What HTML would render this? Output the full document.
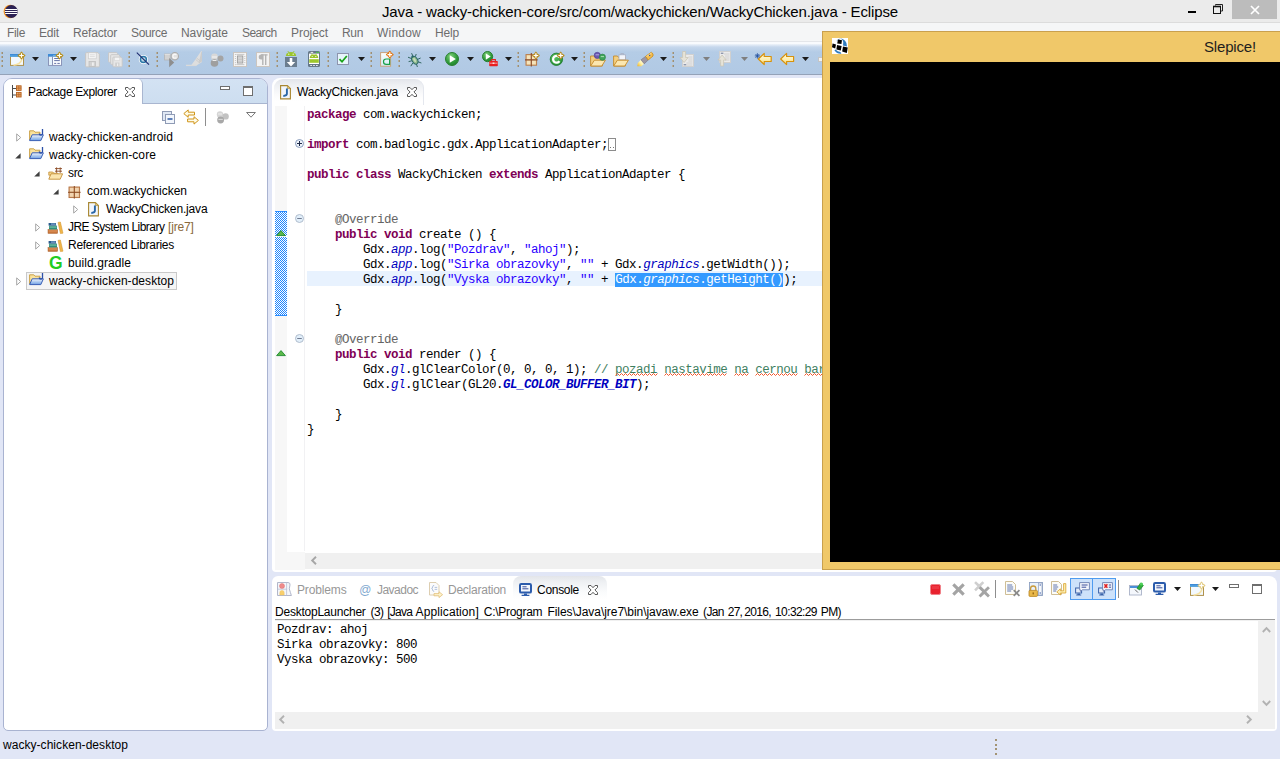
<!DOCTYPE html>
<html>
<head>
<meta charset="utf-8">
<title>Java - Eclipse</title>
<style>
*{margin:0;padding:0;box-sizing:border-box;}
html,body{width:1280px;height:759px;overflow:hidden;background:#e1e6f6;font-family:"Liberation Sans",sans-serif;font-size:12px;color:#000;}
.abs{position:absolute;}
svg{position:absolute;overflow:visible;}
.t{position:absolute;white-space:pre;line-height:16px;height:16px;}
#titlebar{left:0;top:0;width:1280px;height:22px;background:#ebebeb;}
#menubar{left:0;top:22px;width:1280px;height:22px;background:linear-gradient(#f5f6f7 0,#f5f6f7 18px,#e4e6ea 18px,#e4e6ea 19px,#f8fafd 19px);border-top:1px solid #dcdcdc;}
#toolbar{left:0;top:44px;width:1280px;height:31px;background:linear-gradient(#eef3fa 0px,#c6d7ec 3px,#b4cce6 8px,#b1c9e4 100%);border-bottom:1px solid #94a2b8;}
.panel{position:absolute;background:#fff;overflow:hidden;}
#pkg{left:3px;top:78px;width:265px;height:653px;border:1px solid #a9b3d1;border-radius:9px 9px 5px 5px;}
#editor{left:272px;top:78px;width:1005px;height:494px;border-radius:8px 8px 4px 4px;}
#console{left:272px;top:576px;width:1005px;height:155px;border-radius:6px 8px 4px 4px;}
#statusbar{left:0;top:735px;width:1280px;height:24px;}
#game{left:822px;top:31px;width:458px;height:539px;background:#f0c869;border:1px solid #c9a04e;border-right:none;}
.code{position:absolute;white-space:pre;line-height:15px;height:15px;font-family:"Liberation Mono",monospace;font-size:12.5px;letter-spacing:-0.5px;color:#000;}
.kw{color:#7f0055;font-weight:bold;}
.str{color:#2a00ff;}
.fld{color:#0000c0;font-style:italic;}
.sfld{color:#0000c0;font-style:italic;font-weight:bold;}
.ann{color:#646464;}
.cmt{color:#3f7f5f;}
.sq{text-decoration:underline wavy #e04040 1px;text-underline-offset:2px;}
.sel{background:#3399ff;color:#fff;}
.sel .fld{color:#fff;}
.hd{position:absolute;width:2px;}
</style>
</head>
<body>
<div id="titlebar" class="abs"><svg style="left:3px;top:4px" width="16" height="15" viewBox="0 0 16 15"><defs><clipPath id="ec"><circle cx="8.2" cy="7.5" r="6.4"/></clipPath></defs><circle cx="7.3" cy="7.5" r="6.7" fill="#f7941e"/><circle cx="8.3" cy="7.5" r="6.5" fill="#2c2255"/><g clip-path="url(#ec)"><rect x="1" y="5" width="15" height="1" fill="#fff"/><rect x="1" y="7" width="15" height="1" fill="#fff"/><rect x="1" y="9" width="15" height="1" fill="#fff"/></g></svg><div class="t" style="left:382px;top:3.5px;letter-spacing:-0.139px;font-size:15px;color:#000;">Java - wacky-chicken-core/src/com/wackychicken/WackyChicken.java - Eclipse</div><div class="abs" style="left:1188px;top:11px;width:8px;height:2px;background:#000;"></div><svg class="abs" style="left:1212px;top:3px" width="12" height="12" viewBox="0 0 12 12"><path d="M3.5 2.5V1.5h7v6.5h-1.5" fill="none" stroke="#222" stroke-width="1"/><rect x="1.5" y="3.5" width="7" height="7" fill="none" stroke="#111" stroke-width="1"/><path d="M1 3.5h8" stroke="#111" stroke-width="1.6"/></svg><div class="abs" style="left:1232px;top:0;width:45px;height:19px;background:#bcbcbc;"></div><svg class="abs" style="left:1250px;top:5px" width="10" height="10" viewBox="0 0 10 10"><path d="M1 1L9 9M9 1L1 9" stroke="#fff" stroke-width="1.7"/></svg></div>
<div id="menubar" class="abs"><div class="t" style="left:7px;top:2px;letter-spacing:-0.336px;color:#6d6d6d;">File</div><div class="t" style="left:39px;top:2px;letter-spacing:-0.172px;color:#6d6d6d;">Edit</div><div class="t" style="left:73px;top:2px;letter-spacing:-0.17px;color:#6d6d6d;">Refactor</div><div class="t" style="left:131px;top:2px;letter-spacing:-0.339px;color:#6d6d6d;">Source</div><div class="t" style="left:181px;top:2px;letter-spacing:-0.047px;color:#6d6d6d;">Navigate</div><div class="t" style="left:242px;top:2px;letter-spacing:-0.589px;color:#6d6d6d;">Search</div><div class="t" style="left:291px;top:2px;letter-spacing:-0.051px;color:#6d6d6d;">Project</div><div class="t" style="left:342px;top:2px;letter-spacing:-0.339px;color:#6d6d6d;">Run</div><div class="t" style="left:377px;top:2px;letter-spacing:0.219px;color:#6d6d6d;">Window</div><div class="t" style="left:435px;top:2px;letter-spacing:-0.172px;color:#6d6d6d;">Help</div></div>
<div id="toolbar" class="abs"><div class="abs" style="left:1px;top:8px;width:1px;height:2px;background:#b9b09c;"></div><div class="abs" style="left:2px;top:8px;width:1px;height:2px;background:#988f7c;"></div><div class="abs" style="left:1px;top:12px;width:1px;height:2px;background:#b9b09c;"></div><div class="abs" style="left:2px;top:12px;width:1px;height:2px;background:#988f7c;"></div><div class="abs" style="left:1px;top:16px;width:1px;height:2px;background:#b9b09c;"></div><div class="abs" style="left:2px;top:16px;width:1px;height:2px;background:#988f7c;"></div><div class="abs" style="left:1px;top:21px;width:1px;height:2px;background:#b9b09c;"></div><div class="abs" style="left:2px;top:21px;width:1px;height:2px;background:#988f7c;"></div><svg style="left:10px;top:7px" width="16" height="16" viewBox="0 0 16 16"><rect x=".5" y="5" width="13" height="9.4" fill="#f3f9fe" stroke="#b0924c"/><rect x="0" y="3" width="14" height="2.7" fill="#3d8bd6"/><rect x="0" y="4.4" width="9" height="1.3" fill="#56a8e4"/><path d="M3.5 14.2Q10.5 13.6 12 8" fill="none" stroke="#f6e2a4" stroke-width="1.5"/><g transform="translate(8,1)"><path d="M3.5 .3Q4.5 2.5 6.7 3.5Q4.5 4.5 3.5 6.7Q2.5 4.5 .3 3.5Q2.5 2.5 3.5 .3z" fill="#c9a02c" stroke="#b8901c" stroke-width="1.4" stroke-linejoin="round"/><path d="M3.5 1.2v4.6M1.2 3.5h4.6" stroke="#fff" stroke-width="1.2"/></g></svg><svg style="left:32px;top:13px" width="7" height="4" viewBox="0 0 7 4"><path d="M0 0h7l-3.5 4z" fill="#1a1a1a"/></svg><svg style="left:48px;top:7px" width="16" height="16" viewBox="0 0 16 16"><rect x=".5" y="5" width="13" height="9.4" fill="#fbfdff" stroke="#8a94b8"/><rect x="1" y="5.6" width="3" height="8.4" fill="#e4f2fb"/><rect x="0" y="3" width="14" height="2.6" fill="#3d8bd6"/><rect x="5" y="4.2" width="6" height="1.4" fill="#7ab8e8"/><path d="M4.5 5.6v9" stroke="#8a94b8"/><path d="M6.2 7.5h5.6M6.2 9.6h5.6M6.2 12.4h2M9.4 12.4h2.4" stroke="#6574a8" stroke-width="1"/><g transform="translate(8,1)"><path d="M3.5 .3Q4.5 2.5 6.7 3.5Q4.5 4.5 3.5 6.7Q2.5 4.5 .3 3.5Q2.5 2.5 3.5 .3z" fill="#c9a02c" stroke="#b8901c" stroke-width="1.4" stroke-linejoin="round"/><path d="M3.5 1.2v4.6M1.2 3.5h4.6" stroke="#fff" stroke-width="1.2"/></g></svg><svg style="left:70px;top:13px" width="7" height="4" viewBox="0 0 7 4"><path d="M0 0h7l-3.5 4z" fill="#1a1a1a"/></svg><svg style="left:85px;top:8px" width="16" height="16" viewBox="0 0 16 16"><path d="M.6 1.6q0-1 1-1h11.3l1.5 1.5v11.8q0 1-1 1H1.6q-1 0-1-1z" fill="#e6e6e6" stroke="#c6c6c6" stroke-width="1"/><rect x="3.4" y=".8" width="7.8" height="6" fill="#f6f6f6" stroke="#cdcdcd" stroke-width=".7"/><path d="M4.8 2.8h5M4.8 4.6h5" stroke="#d4d4d4" stroke-width=".8"/><rect x="4" y="9.4" width="6.6" height="5.2" fill="#d2d2d2" stroke="#bcbcbc" stroke-width=".7"/><rect x="7" y="10.4" width="1.8" height="3.4" fill="#efefef"/></svg><svg style="left:108px;top:8px" width="16" height="16" viewBox="0 0 16 16"><g transform="translate(0,0)"><path d="M.5 1.2q0-.7.7-.7h7.2l1.4 1.4v7.6q0 .7-.7.7H1.2q-.7 0-.7-.7z" fill="#e6e6e6" stroke="#c6c6c6" stroke-width=".9"/></g><g transform="translate(2.2,2.2)"><path d="M.5 1.2q0-.7.7-.7h7.2l1.4 1.4v7.6q0 .7-.7.7H1.2q-.7 0-.7-.7z" fill="#e6e6e6" stroke="#c6c6c6" stroke-width=".9"/></g><g transform="translate(4.4,4.6)"><path d="M.5 1.2q0-.7.7-.7h7.2l1.4 1.4v7.6q0 .7-.7.7H1.2q-.7 0-.7-.7z" fill="#e6e6e6" stroke="#c6c6c6" stroke-width=".9"/><rect x="2.2" y=".8" width="5.2" height="3.2" fill="#f5f5f5" stroke="#d0d0d0" stroke-width=".5"/><rect x="2.8" y="6" width="4.2" height="3.8" fill="#d0d0d0"/><rect x="4.6" y="6.8" width="1.2" height="2.6" fill="#efefef"/></g></svg><div class="abs" style="left:128px;top:8px;width:1px;height:2px;background:#b9b09c;"></div><div class="abs" style="left:129px;top:8px;width:1px;height:2px;background:#988f7c;"></div><div class="abs" style="left:128px;top:12px;width:1px;height:2px;background:#b9b09c;"></div><div class="abs" style="left:129px;top:12px;width:1px;height:2px;background:#988f7c;"></div><div class="abs" style="left:128px;top:16px;width:1px;height:2px;background:#b9b09c;"></div><div class="abs" style="left:129px;top:16px;width:1px;height:2px;background:#988f7c;"></div><div class="abs" style="left:128px;top:21px;width:1px;height:2px;background:#b9b09c;"></div><div class="abs" style="left:129px;top:21px;width:1px;height:2px;background:#988f7c;"></div><svg style="left:136px;top:8px" width="16" height="16" viewBox="0 0 16 16"><circle cx="7.4" cy="7.6" r="4.6" fill="#fff"/><circle cx="7.4" cy="7.6" r="3" fill="#b9d5e4" stroke="#2a78a8" stroke-width="1.5"/><path d="M.8 .6L13 12.6" stroke="#1d2a6e" stroke-width="1.1"/></svg><div class="abs" style="left:156px;top:8px;width:1px;height:2px;background:#b9b09c;"></div><div class="abs" style="left:157px;top:8px;width:1px;height:2px;background:#988f7c;"></div><div class="abs" style="left:156px;top:12px;width:1px;height:2px;background:#b9b09c;"></div><div class="abs" style="left:157px;top:12px;width:1px;height:2px;background:#988f7c;"></div><div class="abs" style="left:156px;top:16px;width:1px;height:2px;background:#b9b09c;"></div><div class="abs" style="left:157px;top:16px;width:1px;height:2px;background:#988f7c;"></div><div class="abs" style="left:156px;top:21px;width:1px;height:2px;background:#b9b09c;"></div><div class="abs" style="left:157px;top:21px;width:1px;height:2px;background:#988f7c;"></div><svg style="left:164px;top:8px" width="16" height="16" viewBox="0 0 16 16"><circle cx="10.8" cy="4.2" r="3.7" fill="#e2e2e2" stroke="#ababab" stroke-width="1.1"/><path d="M12.4 2.9a2 2 0 1 0 0 2.6" fill="none" stroke="#fafafa" stroke-width="1.1"/><rect x=".6" y="2" width="5.6" height="6" fill="#d2d2d2" stroke="#b4b4b4" stroke-width=".8"/><path d="M.6 2.4h5.6" stroke="#e8e8e8" stroke-width=".8"/><path d="M5.2 6v9.2l5-4.6z" fill="#8e8e8e"/></svg><svg style="left:186px;top:7px" width="16" height="16" viewBox="0 0 16 16"><path d="M15.2 0L16 0L16 11L10.5 14.6L5 14.6L9.4 8.6z" fill="#dedede"/><path d="M15.4 .4L16 .4L16 10.6L12.6 12.6z" fill="#cccccc"/><path d="M9.6 8.4L13.4 11.6M10.6 7L14.2 10" stroke="#c6c6c6" stroke-width=".8"/><path d="M0 14.4h10.5" stroke="#dadada" stroke-width="1.3"/></svg><svg style="left:210px;top:9px" width="16" height="16" viewBox="0 0 16 16"><circle cx="4.5" cy="4" r="3.4" fill="#d8d8d8"/><circle cx="10.5" cy="5.5" r="3" fill="#a4a4a4"/><circle cx="4.5" cy="10" r="3.8" fill="#9f9f9f"/><path d="M2 4h5" stroke="#f2f2f2" stroke-width="1.2"/><path d="M2.5 7.5h4" stroke="#ececec" stroke-width="1"/></svg><svg style="left:233px;top:8px" width="16" height="16" viewBox="0 0 16 16"><rect x=".5" y=".5" width="13" height="14" fill="#f5f5f5" stroke="#cbc5bf"/><rect x="4.4" y="4" width="5.4" height="7" fill="#e2e2e2" stroke="#9a9a9a" stroke-width=".9"/><path d="M4.6 6h5M4.6 7.6h5M4.6 9.2h5" stroke="#b0b0b0" stroke-width=".6"/><path d="M3.4 2.4h8M3.4 12.6h8" stroke="#c2c2c2" stroke-width=".9"/><path d="M2.4 2v11.4M11.8 4v8" stroke="#b8b8b8" stroke-width=".9" stroke-dasharray=".9 1.15"/></svg><svg style="left:256px;top:8px" width="16" height="16" viewBox="0 0 16 16"><rect x=".5" y=".5" width="13" height="14" fill="#f3f3f3" stroke="#cbc5bf"/><path d="M7.2 2.4H5.2a2.5 2.5 0 0 0 0 5H7.2z" fill="#b4b4b4"/><path d="M6.8 2.4V13M9.7 2.4V13" stroke="#b4b4b4" stroke-width="1.4"/><path d="M5 2.9h6.6" stroke="#b4b4b4" stroke-width="1.2"/></svg><div class="abs" style="left:276px;top:8px;width:1px;height:2px;background:#b9b09c;"></div><div class="abs" style="left:277px;top:8px;width:1px;height:2px;background:#988f7c;"></div><div class="abs" style="left:276px;top:12px;width:1px;height:2px;background:#b9b09c;"></div><div class="abs" style="left:277px;top:12px;width:1px;height:2px;background:#988f7c;"></div><div class="abs" style="left:276px;top:16px;width:1px;height:2px;background:#b9b09c;"></div><div class="abs" style="left:277px;top:16px;width:1px;height:2px;background:#988f7c;"></div><div class="abs" style="left:276px;top:21px;width:1px;height:2px;background:#b9b09c;"></div><div class="abs" style="left:277px;top:21px;width:1px;height:2px;background:#988f7c;"></div><svg style="left:285px;top:7px" width="16" height="16" viewBox="0 0 16 16"><path d="M0.7999999999999998 4.9a5.2 3.9 0 0 1 10.4 0z" fill="#9bc52a"/><path d="M2.88 0.09999999999999998l1.2 1.8M9.120000000000001 0.09999999999999998l-1.2 1.8" stroke="#9bc52a" stroke-width=".9"/><circle cx="3.816" cy="3.145" r=".6" fill="#fff"/><circle cx="8.184000000000001" cy="3.145" r=".6" fill="#fff"/><rect x="0" y="6" width="12" height="10" fill="#6b7d8f"/><path d="M4.7 7h2.6v4h2.9l-4.2 4.4-4.2-4.4h2.9z" fill="#fff"/></svg><svg style="left:308px;top:7px" width="16" height="16" viewBox="0 0 16 16"><rect x="0" y="0" width="12" height="16" rx="1.6" fill="#667888"/><rect x="1" y="2.6" width="10" height="10.4" fill="#fff"/><rect x="2.6" y=".9" width="2.6" height=".9" fill="#fff"/><circle cx="8.6" cy="1.4" r=".6" fill="#3fe03f"/><circle cx="10.4" cy="1.4" r=".6" fill="#3fe03f"/><path d="M1.7000000000000002 7.04a4.3 3.44 0 0 1 8.6 0z" fill="#9bc52a"/><path d="M3.4200000000000004 2.7l1.2 1.8M8.58 2.7l-1.2 1.8" stroke="#9bc52a" stroke-width=".9"/><circle cx="4.194" cy="5.492" r=".6" fill="#fff"/><circle cx="7.806" cy="5.492" r=".6" fill="#fff"/><rect x="1.2" y="8.2" width="9.6" height="3.6" fill="#9dc72c"/><rect x="2.4" y="14" width="1.4" height="1" fill="#fff"/><rect x="5.3" y="14" width="1.4" height="1" fill="#fff"/><rect x="8.2" y="14" width="1.4" height="1" fill="#fff"/></svg><div class="abs" style="left:327px;top:8px;width:1px;height:2px;background:#b9b09c;"></div><div class="abs" style="left:328px;top:8px;width:1px;height:2px;background:#988f7c;"></div><div class="abs" style="left:327px;top:12px;width:1px;height:2px;background:#b9b09c;"></div><div class="abs" style="left:328px;top:12px;width:1px;height:2px;background:#988f7c;"></div><div class="abs" style="left:327px;top:16px;width:1px;height:2px;background:#b9b09c;"></div><div class="abs" style="left:328px;top:16px;width:1px;height:2px;background:#988f7c;"></div><div class="abs" style="left:327px;top:21px;width:1px;height:2px;background:#b9b09c;"></div><div class="abs" style="left:328px;top:21px;width:1px;height:2px;background:#988f7c;"></div><svg style="left:337px;top:9px" width="16" height="16" viewBox="0 0 16 16"><rect x=".5" y=".5" width="11" height="11" fill="#e6f5fb" stroke="#8d94ad"/><path d="M2.5 6.2L5 8.8L9.8 3" fill="none" stroke="#17a317" stroke-width="1.7"/></svg><svg style="left:358px;top:13px" width="7" height="4" viewBox="0 0 7 4"><path d="M0 0h7l-3.5 4z" fill="#1a1a1a"/></svg><div class="abs" style="left:370px;top:8px;width:1px;height:2px;background:#b9b09c;"></div><div class="abs" style="left:371px;top:8px;width:1px;height:2px;background:#988f7c;"></div><div class="abs" style="left:370px;top:12px;width:1px;height:2px;background:#b9b09c;"></div><div class="abs" style="left:371px;top:12px;width:1px;height:2px;background:#988f7c;"></div><div class="abs" style="left:370px;top:16px;width:1px;height:2px;background:#b9b09c;"></div><div class="abs" style="left:371px;top:16px;width:1px;height:2px;background:#988f7c;"></div><div class="abs" style="left:370px;top:21px;width:1px;height:2px;background:#b9b09c;"></div><div class="abs" style="left:371px;top:21px;width:1px;height:2px;background:#988f7c;"></div><svg style="left:380px;top:7px" width="16" height="16" viewBox="0 0 16 16"><defs><linearGradient id="adg" x1="0" y1="0" x2="0" y2="1"><stop offset="0" stop-color="#fdfefe"/><stop offset="1" stop-color="#d2ecf6"/></linearGradient></defs><rect x=".6" y="1.6" width="10" height="13.6" fill="url(#adg)" stroke="#c9a27c" stroke-width="1"/><path d="M9.6 7.4V14M9.6 8H6.2a2.7 2.7 0 0 0 0 5.4h3.4" fill="none" stroke="#18a048" stroke-width="1.2"/><g transform="translate(6.3,0.1)"><path d="M3.5 .3Q4.5 2.5 6.7 3.5Q4.5 4.5 3.5 6.7Q2.5 4.5 .3 3.5Q2.5 2.5 3.5 .3z" fill="#f08c2c" stroke="#e07818" stroke-width="1.4" stroke-linejoin="round"/><path d="M3.5 1.2v4.6M1.2 3.5h4.6" stroke="#fff" stroke-width="1.2"/></g></svg><div class="abs" style="left:398px;top:8px;width:1px;height:2px;background:#b9b09c;"></div><div class="abs" style="left:399px;top:8px;width:1px;height:2px;background:#988f7c;"></div><div class="abs" style="left:398px;top:12px;width:1px;height:2px;background:#b9b09c;"></div><div class="abs" style="left:399px;top:12px;width:1px;height:2px;background:#988f7c;"></div><div class="abs" style="left:398px;top:16px;width:1px;height:2px;background:#b9b09c;"></div><div class="abs" style="left:399px;top:16px;width:1px;height:2px;background:#988f7c;"></div><div class="abs" style="left:398px;top:21px;width:1px;height:2px;background:#b9b09c;"></div><div class="abs" style="left:399px;top:21px;width:1px;height:2px;background:#988f7c;"></div><svg style="left:407px;top:8px" width="16" height="16" viewBox="0 0 16 16"><g stroke="#245a52" stroke-width=".9" fill="none"><path d="M4.6 1.2L6 4.4M9.2 2L8.4 4.6M1 5.2L4.6 6.6M13.6 6L10.6 7.4M1.6 9.6L4.8 8.8M14.4 11L11 9.8M3.8 14.2L5.8 11M10.4 15L9.4 11.8"/></g><ellipse cx="7.8" cy="8.2" rx="2.7" ry="4.2" transform="rotate(-30 7.8 8.2)" fill="#8fb98c" stroke="#2a6868" stroke-width="1"/><ellipse cx="7.6" cy="8" rx="1.1" ry="2.4" transform="rotate(-30 7.6 8)" fill="#c4dcbc"/><circle cx="5.6" cy="4.6" r="1.2" fill="#2a6868"/></svg><svg style="left:429px;top:13px" width="7" height="4" viewBox="0 0 7 4"><path d="M0 0h7l-3.5 4z" fill="#1a1a1a"/></svg><svg style="left:445px;top:8px" width="16" height="16" viewBox="0 0 16 16"><defs><radialGradient id="rg70" cx=".4" cy=".3" r=".8"><stop offset="0" stop-color="#7fd07a"/><stop offset=".6" stop-color="#2f9a3a"/><stop offset="1" stop-color="#1d7a2a"/></radialGradient></defs><circle cx="7" cy="7" r="6.5" fill="url(#rg70)" stroke="#2a8032" stroke-width="1"/><path d="M4.76 3.1499999999999995L10.850000000000001 7L4.76 10.850000000000001z" fill="#fff"/></svg><svg style="left:467px;top:13px" width="7" height="4" viewBox="0 0 7 4"><path d="M0 0h7l-3.5 4z" fill="#1a1a1a"/></svg><svg style="left:482px;top:7px" width="16" height="16" viewBox="0 0 16 16"><defs><radialGradient id="rg56" cx=".4" cy=".3" r=".8"><stop offset="0" stop-color="#7fd07a"/><stop offset=".6" stop-color="#2f9a3a"/><stop offset="1" stop-color="#1d7a2a"/></radialGradient></defs><circle cx="5.6" cy="5.6" r="5.1" fill="url(#rg56)" stroke="#2a8032" stroke-width="1"/><path d="M3.808 2.5199999999999996L8.68 5.6L3.808 8.68z" fill="#fff"/><rect x="7.2" y="10" width="8.6" height="5.2" rx=".8" fill="#e82020"/><path d="M9.6 10V8.6h3.8V10" fill="none" stroke="#e82020" stroke-width="1.1"/><path d="M7.6 12.2h7.8" stroke="#fbb" stroke-width=".8"/><rect x="10.6" y="11.5" width="1.8" height="1.5" fill="#fdd"/></svg><svg style="left:505px;top:13px" width="7" height="4" viewBox="0 0 7 4"><path d="M0 0h7l-3.5 4z" fill="#1a1a1a"/></svg><div class="abs" style="left:517px;top:8px;width:1px;height:2px;background:#b9b09c;"></div><div class="abs" style="left:518px;top:8px;width:1px;height:2px;background:#988f7c;"></div><div class="abs" style="left:517px;top:12px;width:1px;height:2px;background:#b9b09c;"></div><div class="abs" style="left:518px;top:12px;width:1px;height:2px;background:#988f7c;"></div><div class="abs" style="left:517px;top:16px;width:1px;height:2px;background:#b9b09c;"></div><div class="abs" style="left:518px;top:16px;width:1px;height:2px;background:#988f7c;"></div><div class="abs" style="left:517px;top:21px;width:1px;height:2px;background:#b9b09c;"></div><div class="abs" style="left:518px;top:21px;width:1px;height:2px;background:#988f7c;"></div><svg style="left:525px;top:8px" width="16" height="16" viewBox="0 0 16 16"><rect x="1" y="2.6" width="10.6" height="10.6" fill="#ecd09a" stroke="#b97a48" stroke-width="1"/><rect x="2" y="3.6" width="3.6" height="3.6" fill="#f5e4bc"/><rect x="7" y="3.6" width="3.6" height="3.6" fill="#f5e4bc"/><rect x="2" y="8.6" width="3.6" height="3.6" fill="#f5e4bc"/><rect x="7" y="8.6" width="3.6" height="3.6" fill="#f5e4bc"/><path d="M6.3 1v13.4M0 7.9h12.6" stroke="#8a4a2a" stroke-width="1.1"/><g transform="translate(7.4,0)"><path d="M3.5 .3Q4.5 2.5 6.7 3.5Q4.5 4.5 3.5 6.7Q2.5 4.5 .3 3.5Q2.5 2.5 3.5 .3z" fill="#d8b048" stroke="#b8902c" stroke-width="1.4" stroke-linejoin="round"/><path d="M3.5 1.2v4.6M1.2 3.5h4.6" stroke="#fff" stroke-width="1.2"/></g></svg><svg style="left:550px;top:7px" width="16" height="16" viewBox="0 0 16 16"><defs><radialGradient id="cg" cx=".4" cy=".35" r=".75"><stop offset="0" stop-color="#5fc060"/><stop offset=".75" stop-color="#2f9a3c"/><stop offset="1" stop-color="#1c7a2a"/></radialGradient></defs><circle cx="6.4" cy="8.3" r="6.2" fill="url(#cg)" stroke="#1f7a2c" stroke-width=".8"/><path d="M9.4 6.5A3.4 3.4 0 1 0 9.4 10.1" fill="none" stroke="#fff" stroke-width="2.3"/><g transform="translate(7.2,1)"><path d="M3.5 .3Q4.5 2.5 6.7 3.5Q4.5 4.5 3.5 6.7Q2.5 4.5 .3 3.5Q2.5 2.5 3.5 .3z" fill="#d8b048" stroke="#b8902c" stroke-width="1.4" stroke-linejoin="round"/><path d="M3.5 1.2v4.6M1.2 3.5h4.6" stroke="#fff" stroke-width="1.2"/></g></svg><svg style="left:571px;top:13px" width="7" height="4" viewBox="0 0 7 4"><path d="M0 0h7l-3.5 4z" fill="#1a1a1a"/></svg><div class="abs" style="left:583px;top:8px;width:1px;height:2px;background:#b9b09c;"></div><div class="abs" style="left:584px;top:8px;width:1px;height:2px;background:#988f7c;"></div><div class="abs" style="left:583px;top:12px;width:1px;height:2px;background:#b9b09c;"></div><div class="abs" style="left:584px;top:12px;width:1px;height:2px;background:#988f7c;"></div><div class="abs" style="left:583px;top:16px;width:1px;height:2px;background:#b9b09c;"></div><div class="abs" style="left:584px;top:16px;width:1px;height:2px;background:#988f7c;"></div><div class="abs" style="left:583px;top:21px;width:1px;height:2px;background:#b9b09c;"></div><div class="abs" style="left:584px;top:21px;width:1px;height:2px;background:#988f7c;"></div><svg style="left:590px;top:8px" width="16" height="16" viewBox="0 0 16 16"><path d="M.6 14V4h3.8l1.2 1.4h6.8V14z" fill="#f3cf80" stroke="#c48a2a" stroke-width=".9" stroke-linejoin="round"/><path d="M.7 14L4.4 8.2h11L11.8 14z" fill="#fbe7b0" stroke="#c48a2a" stroke-width=".9" stroke-linejoin="round"/><circle cx="7.3" cy="3.4" r="3.1" fill="#6a58b0" stroke="#4e3d96" stroke-width=".6"/><path d="M5.6 2.8h3.4" stroke="#b6aae4" stroke-width="1"/><circle cx="12.4" cy="5.2" r="3.1" fill="#3fa45b" stroke="#2a8244" stroke-width=".6"/><path d="M10.8 4.6h3.2" stroke="#a6dcb0" stroke-width="1"/></svg><svg style="left:613px;top:9px" width="16" height="16" viewBox="0 0 16 16"><path d="M.6 13V3h3.8l1.2 1.4h6.8V13z" fill="#f3cf80" stroke="#c48a2a" stroke-width=".9" stroke-linejoin="round"/><rect x="6" y="1.8" width="6.4" height="5" fill="#f2f5fb" stroke="#a9b0c4" stroke-width=".8"/><path d="M7.8 1.8V.6h2.8V1.8" fill="none" stroke="#a9b0c4" stroke-width=".9"/><path d="M.7 13L4.4 7.2h11L11.8 13z" fill="#fbe7b0" stroke="#c48a2a" stroke-width=".9" stroke-linejoin="round"/></svg><svg style="left:637px;top:8px" width="16" height="16" viewBox="0 0 16 16"><defs><linearGradient id="flg" x1="1" y1="0" x2="0" y2="1"><stop offset="0" stop-color="#fffdf0"/><stop offset=".5" stop-color="#fff3b0"/><stop offset="1" stop-color="#f0b41c"/></linearGradient></defs><path d="M4.2 7.6L7.2 11.8L4.4 14.2H.3L.8 11z" fill="url(#flg)"/><path d="M4 7.8L8.6 4.4L11.2 8L7.2 11.8z" fill="#9c96a2" stroke="#77717f" stroke-width=".6"/><path d="M8.6 4.4L14.4 .2L16 2v2L11.2 8z" fill="#f5bc4e" stroke="#c88a14" stroke-width=".8" stroke-linejoin="round"/><path d="M9.4 4.6L14.4 1" stroke="#fbe09a" stroke-width=".9"/><path d="M12.2 3l.9 .9" stroke="#2a58b0" stroke-width="1.1"/></svg><svg style="left:660px;top:13px" width="7" height="4" viewBox="0 0 7 4"><path d="M0 0h7l-3.5 4z" fill="#1a1a1a"/></svg><div class="abs" style="left:672px;top:8px;width:1px;height:2px;background:#b9b09c;"></div><div class="abs" style="left:673px;top:8px;width:1px;height:2px;background:#988f7c;"></div><div class="abs" style="left:672px;top:12px;width:1px;height:2px;background:#b9b09c;"></div><div class="abs" style="left:673px;top:12px;width:1px;height:2px;background:#988f7c;"></div><div class="abs" style="left:672px;top:16px;width:1px;height:2px;background:#b9b09c;"></div><div class="abs" style="left:673px;top:16px;width:1px;height:2px;background:#988f7c;"></div><div class="abs" style="left:672px;top:21px;width:1px;height:2px;background:#b9b09c;"></div><div class="abs" style="left:673px;top:21px;width:1px;height:2px;background:#988f7c;"></div><svg style="left:680px;top:7px" width="16" height="16" viewBox="0 0 16 16"><rect x="2.5" y="3.5" width="11" height="12" fill="#ebebeb" stroke="#d0d0d0"/><path d="M8.4 6h4M8.4 8h4M8.4 10h4M6.4 12h6M6.4 14h6" stroke="#cdcdcd" stroke-width=".9"/><rect x="3.6" y="13" width="2.6" height="1.4" fill="#8f98ae"/><path d="M2.6 .5h3v6h2.6l-4.1 5-4.1-5h2.6z" fill="#e6e3d8" stroke="#c9c5b6" stroke-width=".8"/></svg><svg style="left:703px;top:13px" width="7" height="4" viewBox="0 0 7 4"><path d="M0 0h7l-3.5 4z" fill="#7f7f7f"/></svg><svg style="left:718px;top:7px" width="16" height="16" viewBox="0 0 16 16"><rect x="1.5" y=".5" width="11" height="11" fill="#ebebeb" stroke="#d0d0d0"/><path d="M6 3h5.4M7 5h4.4M7 7h4.4M7 9h4.4" stroke="#cdcdcd" stroke-width=".9"/><rect x="2.8" y="1.6" width="2.6" height="1.4" fill="#8f98ae"/><g transform="translate(0,15.5) scale(1,-1)"><path d="M2.6 .5h3v6h2.6l-4.1 5-4.1-5h2.6z" fill="#e6e3d8" stroke="#c9c5b6" stroke-width=".8"/></g></svg><svg style="left:741px;top:13px" width="7" height="4" viewBox="0 0 7 4"><path d="M0 0h7l-3.5 4z" fill="#7f7f7f"/></svg><svg style="left:755px;top:9px" width="16" height="16" viewBox="0 0 16 16"><defs><linearGradient id="yag" x1="0" y1="0" x2="0" y2="1"><stop offset="0" stop-color="#fffbe0"/><stop offset=".55" stop-color="#fdeeb0"/><stop offset="1" stop-color="#f8d46a"/></linearGradient></defs><path d="M3.3 6L9.2 .4v3.1h7v5h-7v3.1z" fill="url(#yag)" stroke="#d8920c" stroke-width="1.2" stroke-linejoin="round"/><path d="M2.4 .2v5.4M-.2 2.9h5.2M.5 1l3.8 3.8M4.3 1L.5 4.8" stroke="#1f4c9c" stroke-width=".8"/></svg><svg style="left:780px;top:9px" width="16" height="16" viewBox="0 0 16 16"><defs><linearGradient id="yag" x1="0" y1="0" x2="0" y2="1"><stop offset="0" stop-color="#fffbe0"/><stop offset=".55" stop-color="#fdeeb0"/><stop offset="1" stop-color="#f8d46a"/></linearGradient></defs><path d="M0.7 6L6.6 .4v3.1h7v5h-7v3.1z" fill="url(#yag)" stroke="#d8920c" stroke-width="1.2" stroke-linejoin="round"/></svg><svg style="left:802px;top:13px" width="7" height="4" viewBox="0 0 7 4"><path d="M0 0h7l-3.5 4z" fill="#1a1a1a"/></svg><div class="abs" style="left:818px;top:13px;width:6px;height:5px;background:#f2f2f2;border:1px solid #c4c4c4;"></div></div>
<div id="pkg" class="panel"></div>
<div class="abs" style="left:0;top:0;"><div class="abs" style="left:4px;top:79px;width:263px;height:25px;background:linear-gradient(#d3e2f3,#cddef0);border-radius:8px 8px 0 0;border-bottom:1px solid #a9b6d0;"></div><div class="abs" style="left:4px;top:79px;width:139px;height:25px;background:#fff;border-radius:8px 5px 0 0;border-right:1px solid #a9b6d0;"></div><svg style="left:12px;top:85px" width="10" height="14" viewBox="0 0 10 14"><path d="M.5 0v13M.5 3.5h4M.5 10h4" stroke="#4a4a4a" stroke-width="1" fill="none"/><rect x="4.5" y=".8" width="4.6" height="4.6" fill="#e9a86a" stroke="#b5601e" stroke-width=".9"/><rect x="4.5" y="7.4" width="4.6" height="4.6" fill="#e9a86a" stroke="#b5601e" stroke-width=".9"/><path d="M6.8 .8v4.6M4.5 3.1h4.6M6.8 7.4v4.6M4.5 9.7h4.6" stroke="#b5601e" stroke-width=".7"/></svg><div class="t" style="left:28px;top:84px;letter-spacing:-0.357px;">Package Explorer</div><svg style="left:125px;top:87px" width="10" height="10" viewBox="0 0 10 10"><path d="M.5 .5H3L5 2.7L7 .5H9.5V2.4L6.9 5L9.5 7.6V9.5H7L5 7.3L3 9.5H.5V7.6L3.1 5L.5 2.4z" fill="#fff" stroke="#585858" stroke-width="1" stroke-linejoin="miter"/></svg><div class="abs" style="left:220px;top:86px;width:10px;height:4px;border:1px solid #6e6e6e;background:#fff;"></div><div class="abs" style="left:243px;top:86px;width:10px;height:10px;border:1px solid #6e6e6e;border-top-width:2px;background:#fff;"></div><svg style="left:162px;top:111px" width="14" height="14" viewBox="0 0 14 14"><rect x=".5" y=".5" width="9" height="9" fill="#dfe7f3" stroke="#8f9bb5"/><rect x="3.5" y="3.5" width="9" height="9" fill="#f2f6fc" stroke="#8f9bb5"/><path d="M5.5 8h5" stroke="#1f4e9c" stroke-width="1.4"/></svg><svg style="left:183px;top:109px" width="16" height="16" viewBox="0 0 16 16"><path d="M.8 4.6L5.2 .9v2.3h6.3v2.8H5.2v2.3z" fill="#fffbe6" stroke="#cf9418" stroke-width="1" stroke-linejoin="round"/><path d="M15.4 11.4L11 7.7V10H4.6v2.8H11v2.3z" fill="#fffbe6" stroke="#cf9418" stroke-width="1" stroke-linejoin="round"/></svg><div class="abs" style="left:205px;top:108px;width:1px;height:18px;background:#8e8e8e;"></div><svg style="left:216px;top:111px" width="14" height="13" viewBox="0 0 14 13"><circle cx="4" cy="3.5" r="3.2" fill="#d5d5d5"/><circle cx="9.6" cy="5.4" r="3.2" fill="#c2c2c2"/><circle cx="4.6" cy="9" r="3.4" fill="#a8a8a8"/><path d="M2 3h4" stroke="#eee" stroke-width="1"/><path d="M2.4 8.4h4.4" stroke="#ddd" stroke-width="1"/></svg><svg style="left:246px;top:112px" width="10" height="6" viewBox="0 0 10 6"><path d="M.6 .5h8.8L5 5.2z" fill="#fff" stroke="#6a6a6a" stroke-width=".9"/></svg><div class="abs" style="left:26px;top:272px;width:151px;height:18px;background:#f5f5f5;border:1px solid #c9c9c9;"></div><svg style="left:16px;top:133px" width="6" height="9" viewBox="0 0 6 9"><path d="M.7 .9L4.7 4.5L.7 8.1z" fill="#fff" stroke="#a6a6a6" stroke-width="1"/></svg><svg style="left:29px;top:129px" width="16" height="13" viewBox="0 0 16 13"><defs><linearGradient id="pjg" x1="0" y1="0" x2="0" y2="1"><stop offset="0" stop-color="#f4f8fd"/><stop offset="1" stop-color="#6d9fe4"/></linearGradient></defs><path d="M.6 11V1.8h4.2l1.2 1.4h5v3" fill="#f9e29c" stroke="#c69a3c" stroke-width=".9"/><path d="M.6 11.6L3.2 5.8h11.2L11.8 11.6z" fill="url(#pjg)" stroke="#3a5fb5" stroke-width="1"/><path d="M13.5 0v4.4a1.6 1.6 0 0 1-3.2 0" fill="none" stroke="#2c50a8" stroke-width="1.3"/></svg><div class="t" style="left:49px;top:129px;letter-spacing:0.092px;">wacky-chicken-android</div><svg style="left:15px;top:153px" width="6" height="6" viewBox="0 0 6 6"><path d="M5.6 .2V5.6H.2z" fill="#404040"/></svg><svg style="left:29px;top:147px" width="16" height="13" viewBox="0 0 16 13"><defs><linearGradient id="pjg" x1="0" y1="0" x2="0" y2="1"><stop offset="0" stop-color="#f4f8fd"/><stop offset="1" stop-color="#6d9fe4"/></linearGradient></defs><path d="M.6 11V1.8h4.2l1.2 1.4h5v3" fill="#f9e29c" stroke="#c69a3c" stroke-width=".9"/><path d="M.6 11.6L3.2 5.8h11.2L11.8 11.6z" fill="url(#pjg)" stroke="#3a5fb5" stroke-width="1"/><path d="M13.5 0v4.4a1.6 1.6 0 0 1-3.2 0" fill="none" stroke="#2c50a8" stroke-width="1.3"/></svg><div class="t" style="left:49px;top:147px;letter-spacing:0.09px;">wacky-chicken-core</div><svg style="left:34px;top:171px" width="6" height="6" viewBox="0 0 6 6"><path d="M5.6 .2V5.6H.2z" fill="#404040"/></svg><svg style="left:48px;top:167px" width="16" height="13" viewBox="0 0 16 13"><path d="M.8 5h4l1 1.2h4v2H.8z" fill="#f7d88a" stroke="#c4903a" stroke-width=".8"/><path d="M.8 12.2L3 6.8h11.6L12.2 12.2z" fill="#fbe5ae" stroke="#c4903a" stroke-width=".9"/><path d="M7 1.6h7M7 4.2h7M8.6 .4v5.4M12.2 .4v5.4" stroke="#8a4a22" stroke-width=".9" fill="none"/></svg><div class="t" style="left:68px;top:165px;letter-spacing:-0.333px;">src</div><svg style="left:53px;top:189px" width="6" height="6" viewBox="0 0 6 6"><path d="M5.6 .2V5.6H.2z" fill="#404040"/></svg><svg style="left:68px;top:186px" width="13" height="13" viewBox="0 0 13 13"><rect x="1" y="1" width="10.6" height="10.6" fill="#e4b98c" stroke="#b06c3a" stroke-width=".9"/><rect x="2" y="2" width="3.6" height="3.6" fill="#f1d4b0"/><rect x="7" y="2" width="3.6" height="3.6" fill="#f1d4b0"/><rect x="2" y="7" width="3.6" height="3.6" fill="#f1d4b0"/><rect x="7" y="7" width="3.6" height="3.6" fill="#f1d4b0"/><path d="M6.3 0v12.6M0 6.3h12.6" stroke="#8a4a22" stroke-width="1"/></svg><div class="t" style="left:87px;top:183px;">com.wackychicken</div><svg style="left:73px;top:205px" width="6" height="9" viewBox="0 0 6 9"><path d="M.7 .9L4.7 4.5L.7 8.1z" fill="#fff" stroke="#a6a6a6" stroke-width="1"/></svg><svg style="left:88px;top:202px" width="11" height="14" viewBox="0 0 11 14"><path d="M.6 .6h6.8l3 3v10.3H.6z" fill="#f2f6fc" stroke="#a88630" stroke-width="1.1"/><path d="M7.4 .6l3 3h-3z" fill="#e4c878" stroke="#a88630" stroke-width=".6"/><path d="M6.9 3.6v5.2q0 2-3.6 2.2" fill="none" stroke="#2a66a6" stroke-width="1.9"/></svg><div class="t" style="left:106px;top:201px;letter-spacing:-0.169px;">WackyChicken.java</div><svg style="left:35px;top:223px" width="6" height="9" viewBox="0 0 6 9"><path d="M.7 .9L4.7 4.5L.7 8.1z" fill="#fff" stroke="#a6a6a6" stroke-width="1"/></svg><svg style="left:48px;top:222px" width="16" height="12" viewBox="0 0 16 12"><rect x="0" y="7.6" width="9.6" height="3.8" fill="#c9773c" stroke="#a85c28" stroke-width=".5"/><rect x=".6" y="8.6" width="8.4" height=".8" fill="#e8a06a"/><rect x="1" y="3.6" width="8" height="3.8" fill="#2f8f7a"/><rect x="1.4" y="4.6" width="7.2" height=".9" fill="#8fd0b8"/><rect x=".6" y="1" width="7.4" height="2.6" fill="#2a5a8c"/><rect x="3" y="1.6" width="4.6" height=".9" fill="#9cc0e8"/><path d="M10 .4l2.4-.4L15 11.2l-2.6.4z" fill="#f0b64a" stroke="#d0902a" stroke-width=".5"/></svg><div class="t" style="left:68px;top:219px;letter-spacing:-0.535px;">JRE System Library</div><div class="t" style="left:168px;top:219px;letter-spacing:-0.165px;color:#8a6a3c;">[jre7]</div><svg style="left:35px;top:241px" width="6" height="9" viewBox="0 0 6 9"><path d="M.7 .9L4.7 4.5L.7 8.1z" fill="#fff" stroke="#a6a6a6" stroke-width="1"/></svg><svg style="left:48px;top:240px" width="16" height="12" viewBox="0 0 16 12"><rect x="0" y="7.6" width="9.6" height="3.8" fill="#c9773c" stroke="#a85c28" stroke-width=".5"/><rect x=".6" y="8.6" width="8.4" height=".8" fill="#e8a06a"/><rect x="1" y="3.6" width="8" height="3.8" fill="#2f8f7a"/><rect x="1.4" y="4.6" width="7.2" height=".9" fill="#8fd0b8"/><rect x=".6" y="1" width="7.4" height="2.6" fill="#2a5a8c"/><rect x="3" y="1.6" width="4.6" height=".9" fill="#9cc0e8"/><path d="M10 .4l2.4-.4L15 11.2l-2.6.4z" fill="#f0b64a" stroke="#d0902a" stroke-width=".5"/></svg><div class="t" style="left:68px;top:237px;letter-spacing:-0.27px;">Referenced Libraries</div><div class="t" style="left:49px;top:254px;font-size:17.5px;font-weight:bold;color:#22cc22;line-height:18px;height:18px;">G</div><div class="t" style="left:68px;top:255px;letter-spacing:0.079px;">build.gradle</div><svg style="left:16px;top:277px" width="6" height="9" viewBox="0 0 6 9"><path d="M.7 .9L4.7 4.5L.7 8.1z" fill="#fff" stroke="#a6a6a6" stroke-width="1"/></svg><svg style="left:29px;top:273px" width="16" height="13" viewBox="0 0 16 13"><defs><linearGradient id="pjg" x1="0" y1="0" x2="0" y2="1"><stop offset="0" stop-color="#f4f8fd"/><stop offset="1" stop-color="#6d9fe4"/></linearGradient></defs><path d="M.6 11V1.8h4.2l1.2 1.4h5v3" fill="#f9e29c" stroke="#c69a3c" stroke-width=".9"/><path d="M.6 11.6L3.2 5.8h11.2L11.8 11.6z" fill="url(#pjg)" stroke="#3a5fb5" stroke-width="1"/><path d="M13.5 0v4.4a1.6 1.6 0 0 1-3.2 0" fill="none" stroke="#2c50a8" stroke-width="1.3"/></svg><div class="t" style="left:49px;top:273px;letter-spacing:0.045px;">wacky-chicken-desktop</div></div>
<div id="editor" class="panel"></div>
<div class="abs" style="left:0;top:0;"><div class="abs" style="left:274px;top:79px;width:150px;height:26px;border-right:1px solid #e4e7ee;border-radius:9px 9px 0 0;background:linear-gradient(#e3e5ea 0,#eef0f3 6px,#fbfbfc 16px,#ffffff 22px);"></div><svg style="left:280px;top:85px" width="11" height="14" viewBox="0 0 11 14"><path d="M.6 .6h6.8l3 3v10.3H.6z" fill="#f2f6fc" stroke="#a88630" stroke-width="1.1"/><path d="M7.4 .6l3 3h-3z" fill="#e4c878" stroke="#a88630" stroke-width=".6"/><path d="M6.9 3.6v5.2q0 2-3.6 2.2" fill="none" stroke="#2a66a6" stroke-width="1.9"/></svg><div class="t" style="left:297px;top:84px;letter-spacing:-0.192px;">WackyChicken.java</div><svg style="left:407px;top:87px" width="10" height="10" viewBox="0 0 10 10"><path d="M.5 .5H3L5 2.7L7 .5H9.5V2.4L6.9 5L9.5 7.6V9.5H7L5 7.3L3 9.5H.5V7.6L3.1 5L.5 2.4z" fill="#fff" stroke="#585858" stroke-width="1" stroke-linejoin="miter"/></svg><div class="abs" style="left:275px;top:106px;width:12px;height:464px;background:#f7f7f7;"></div><div class="abs" style="left:304px;top:106px;width:1px;height:445px;background:#f1f1f3;"></div><div class="abs" style="left:287px;top:552px;width:18px;height:18px;background:#f7f7f7;"></div><div class="abs" style="left:275px;top:211px;width:12px;height:105px;background-color:#fff;background-image:linear-gradient(45deg,#1f86ff 25%,transparent 25%,transparent 75%,#1f86ff 75%),linear-gradient(45deg,#1f86ff 25%,transparent 25%,transparent 75%,#1f86ff 75%);background-size:2px 2px;background-position:0 0,1px 1px;border-top:1px solid #2a8cff;border-bottom:1px solid #2a8cff;"></div><div class="abs" style="left:275px;top:236px;width:12px;height:1px;background:#fff;"></div><svg style="left:276px;top:230px" width="10" height="7" viewBox="0 0 10 7"><path d="M5 .6L9.4 5.6H.6z" fill="#5cb84a" stroke="#1e8a2e" stroke-width=".9" stroke-linejoin="round"/></svg><svg style="left:276px;top:350px" width="10" height="7" viewBox="0 0 10 7"><path d="M5 .6L9.4 5.6H.6z" fill="#5cb84a" stroke="#1e8a2e" stroke-width=".9" stroke-linejoin="round"/></svg><svg style="left:295px;top:139px" width="9" height="9" viewBox="0 0 9 9"><circle cx="4.5" cy="4.5" r="4" fill="#eef3fa" stroke="#7f93b5" stroke-width=".9"/><path d="M2 4.5h5M4.5 2v5" stroke="#1e2a48" stroke-width="1"/></svg><svg style="left:295px;top:214px" width="9" height="9" viewBox="0 0 9 9"><circle cx="4.5" cy="4.5" r="4" fill="#e2effa" stroke="#aab8c8" stroke-width=".9"/><path d="M2.2 4.5h4.6" stroke="#707a90" stroke-width="1"/></svg><svg style="left:295px;top:334px" width="9" height="9" viewBox="0 0 9 9"><circle cx="4.5" cy="4.5" r="4" fill="#e2effa" stroke="#aab8c8" stroke-width=".9"/><path d="M2.2 4.5h4.6" stroke="#707a90" stroke-width="1"/></svg><div class="abs" style="left:307px;top:271px;width:520px;height:15px;background:#e8f2fe;"></div><div class="code" style="left:307px;top:108px;"><span class="kw">package</span> com.wackychicken;</div><div class="code" style="left:307px;top:138px;"><span class="kw">import</span> com.badlogic.gdx.ApplicationAdapter;</div><div class="code" style="left:307px;top:168px;"><span class="kw">public</span> <span class="kw">class</span> WackyChicken <span class="kw">extends</span> ApplicationAdapter {</div><div class="code" style="left:307px;top:213px;">    <span class="ann">@Override</span></div><div class="code" style="left:307px;top:228px;">    <span class="kw">public</span> <span class="kw">void</span> create () {</div><div class="code" style="left:307px;top:243px;">        Gdx.<span class="fld">app</span>.log(<span class="str">"Pozdrav"</span>, <span class="str">"ahoj"</span>);</div><div class="code" style="left:307px;top:258px;">        Gdx.<span class="fld">app</span>.log(<span class="str">"Sirka obrazovky"</span>, <span class="str">""</span> + Gdx.<span class="fld">graphics</span>.getWidth());</div><div class="code" style="left:307px;top:273px;">        Gdx.<span class="fld">app</span>.log(<span class="str">"Vyska obrazovky"</span>, <span class="str">""</span> + <span class="sel">Gdx.<span class="fld">graphics</span>.getHeight()</span>);</div><div class="code" style="left:307px;top:303px;">    }</div><div class="code" style="left:307px;top:333px;">    <span class="ann">@Override</span></div><div class="code" style="left:307px;top:348px;">    <span class="kw">public</span> <span class="kw">void</span> render () {</div><div class="code" style="left:307px;top:363px;">        Gdx.<span class="fld">gl</span>.glClearColor(0, 0, 0, 1); <span class="cmt">// </span><span class="cmt">pozadi</span><span class="cmt"> </span><span class="cmt">nastavime</span><span class="cmt"> </span><span class="cmt">na</span><span class="cmt"> </span><span class="cmt">cernou</span><span class="cmt"> </span><span class="cmt">barvu</span></div><div class="code" style="left:307px;top:378px;">        Gdx.<span class="fld">gl</span>.glClear(GL20.<span class="sfld">GL_COLOR_BUFFER_BIT</span>);</div><div class="code" style="left:307px;top:408px;">    }</div><div class="code" style="left:307px;top:423px;">}</div><div class="abs" style="left:608px;top:138px;width:8px;height:13px;border:1px solid #8c8c8c;"></div><div class="abs" style="left:610px;top:147px;width:1px;height:1px;background:#777;"></div><div class="abs" style="left:613px;top:147px;width:1px;height:1px;background:#777;"></div><svg style="left:615px;top:373px" width="43" height="3" viewBox="0 0 43 3"><polyline points="0.5,2.5 2.5,0.5 4.5,2.5 6.5,0.5 8.5,2.5 10.5,0.5 12.5,2.5 14.5,0.5 16.5,2.5 18.5,0.5 20.5,2.5 22.5,0.5 24.5,2.5 26.5,0.5 28.5,2.5 30.5,0.5 32.5,2.5 34.5,0.5 36.5,2.5 38.5,0.5 40.5,2.5 42.5,0.5" fill="none" stroke="#f2562a" stroke-width="1"/></svg><svg style="left:664px;top:373px" width="64" height="3" viewBox="0 0 64 3"><polyline points="0.5,2.5 2.5,0.5 4.5,2.5 6.5,0.5 8.5,2.5 10.5,0.5 12.5,2.5 14.5,0.5 16.5,2.5 18.5,0.5 20.5,2.5 22.5,0.5 24.5,2.5 26.5,0.5 28.5,2.5 30.5,0.5 32.5,2.5 34.5,0.5 36.5,2.5 38.5,0.5 40.5,2.5 42.5,0.5 44.5,2.5 46.5,0.5 48.5,2.5 50.5,0.5 52.5,2.5 54.5,0.5 56.5,2.5 58.5,0.5 60.5,2.5 62.5,0.5" fill="none" stroke="#f2562a" stroke-width="1"/></svg><svg style="left:734px;top:373px" width="15" height="3" viewBox="0 0 15 3"><polyline points="0.5,2.5 2.5,0.5 4.5,2.5 6.5,0.5 8.5,2.5 10.5,0.5 12.5,2.5 14.5,0.5" fill="none" stroke="#f2562a" stroke-width="1"/></svg><svg style="left:755px;top:373px" width="43" height="3" viewBox="0 0 43 3"><polyline points="0.5,2.5 2.5,0.5 4.5,2.5 6.5,0.5 8.5,2.5 10.5,0.5 12.5,2.5 14.5,0.5 16.5,2.5 18.5,0.5 20.5,2.5 22.5,0.5 24.5,2.5 26.5,0.5 28.5,2.5 30.5,0.5 32.5,2.5 34.5,0.5 36.5,2.5 38.5,0.5 40.5,2.5 42.5,0.5" fill="none" stroke="#f2562a" stroke-width="1"/></svg><svg style="left:804px;top:373px" width="36" height="3" viewBox="0 0 36 3"><polyline points="0.5,2.5 2.5,0.5 4.5,2.5 6.5,0.5 8.5,2.5 10.5,0.5 12.5,2.5 14.5,0.5 16.5,2.5 18.5,0.5 20.5,2.5 22.5,0.5 24.5,2.5 26.5,0.5 28.5,2.5 30.5,0.5 32.5,2.5 34.5,0.5" fill="none" stroke="#f2562a" stroke-width="1"/></svg><div class="abs" style="left:305px;top:553px;width:520px;height:16px;background:#f0f0f0;"></div><svg style="left:311px;top:556px" width="6" height="9" viewBox="0 0 6 9"><path d="M5 .8L1.2 4.5L5 8.2" fill="none" stroke="#a6a6a6" stroke-width="1.9"/></svg></div>
<div id="console" class="panel"></div>
<div class="abs" style="left:0;top:0;"><div class="abs" style="left:513px;top:576px;width:94px;height:26px;border-radius:8px 8px 0 0;background:linear-gradient(#e3e5ea 0,#eef0f3 6px,#fafbfc 16px,#ffffff 23px);"></div><svg style="left:277px;top:581px" width="15" height="16" viewBox="0 0 15 16"><path d="M.5 1.5h10.5q2.4 .2 2 2.4q-1.6 4 .4 7.6l1 3h-13.9z" fill="#f4f6fa" stroke="#a9afc4" stroke-width=".9"/><path d="M.5 8.2h9.6M9.6 1.5v13" stroke="#b9bfd2" stroke-width=".8"/><circle cx="5" cy="5" r="2.5" fill="#ee8a8a" stroke="#e27070" stroke-width=".5"/><path d="M2.8 14v-2.2q0-2.4 2.2-2.4t2.2 2.4V14z" fill="#f8cf6e" stroke="#f0c050" stroke-width=".4"/></svg><div class="t" style="left:297px;top:581.5px;letter-spacing:-0.148px;color:#979797;">Problems</div><div class="t" style="left:359px;top:581.5px;color:#7fa8cf;font-style:italic;">@</div><div class="t" style="left:377px;top:581.5px;letter-spacing:-0.529px;color:#979797;">Javadoc</div><svg style="left:429px;top:582px" width="15" height="15" viewBox="0 0 15 15"><path d="M.5 .5h6.5l3 3v9.5h-9.5z" fill="#fbfbfc" stroke="#d9c8a8" stroke-width=".9"/><path d="M5.2 3.4q-1.6 0-1.6 1.5t-1 1.5q1 0 1 1.5t1.6 1.5" fill="none" stroke="#9fb4d4" stroke-width=".8"/><path d="M5.6 5.4h2.6M5.6 7.4h2.6" stroke="#9fb4d4" stroke-width=".8"/><path d="M5 11.6h5v-1.8l3.6 2.9L10 15.6v-1.8H5z" fill="#fdf3cc" stroke="#e2bf7a" stroke-width=".8" stroke-linejoin="round"/></svg><div class="t" style="left:448px;top:581.5px;letter-spacing:-0.246px;color:#979797;">Declaration</div><svg style="left:519px;top:583px" width="14" height="14" viewBox="0 0 14 14"><rect x="1" y="1" width="11" height="8.6" rx="1.2" fill="#f3f7fc" stroke="#2c5cac" stroke-width="2"/><path d="M3.4 3.8h4.2M3.4 5.8h6" stroke="#3a4f9a" stroke-width="1"/><path d="M5 10.4h3v1.3h2.4v1.4H2.6v-1.4H5z" fill="#2c5cac"/></svg><div class="t" style="left:537px;top:581.5px;letter-spacing:-0.29px;">Console</div><svg style="left:588px;top:585px" width="10" height="10" viewBox="0 0 10 10"><path d="M.5 .5H3L5 2.7L7 .5H9.5V2.4L6.9 5L9.5 7.6V9.5H7L5 7.3L3 9.5H.5V7.6L3.1 5L.5 2.4z" fill="#fff" stroke="#585858" stroke-width="1" stroke-linejoin="miter"/></svg><div class="t" style="left:275px;top:604px;letter-spacing:-0.231px;">DesktopLauncher</div><div class="t" style="left:370.6px;top:604px;letter-spacing:-0.6px;">(3)</div><div class="t" style="left:387.2px;top:604px;letter-spacing:-0.75px;">[Java</div><div class="t" style="left:415.6px;top:604px;letter-spacing:0.1px;">Application]</div><div class="t" style="left:483.8px;top:604px;letter-spacing:-0.285px;">C:\Program</div><div class="t" style="left:547.4px;top:604px;letter-spacing:-0.05px;">Files\Java\jre7\bin\javaw.exe</div><div class="t" style="left:703.0px;top:604px;letter-spacing:-0.6px;">(Jan</div><div class="t" style="left:727.8px;top:604px;letter-spacing:-0.8px;">27,</div><div class="t" style="left:744.3px;top:604px;letter-spacing:-0.7px;">2016,</div><div class="t" style="left:775.0px;top:604px;letter-spacing:-0.6px;">10:32:29</div><div class="t" style="left:820.8px;top:604px;letter-spacing:-0.6px;">PM)</div><div class="abs" style="left:275px;top:619px;width:1000px;height:1px;background:#9c9c9c;"></div><div class="abs" style="left:275px;top:620px;width:1000px;height:1px;background:#f0f0f0;"></div><div class="code" style="left:277px;top:623px;">Pozdrav: ahoj</div><div class="code" style="left:277px;top:638px;">Sirka obrazovky: 800</div><div class="code" style="left:277px;top:653px;">Vyska obrazovky: 500</div><div class="abs" style="left:1258px;top:621px;width:17px;height:92px;background:#f0f0f0;"></div><svg style="left:1262px;top:627px" width="9" height="6" viewBox="0 0 9 6"><path d="M.8 5L4.5 1.2L8.2 5" fill="none" stroke="#b2b2b2" stroke-width="1.9"/></svg><svg style="left:1262px;top:700px" width="9" height="6" viewBox="0 0 9 6"><path d="M.8 1L4.5 4.8L8.2 1" fill="none" stroke="#b2b2b2" stroke-width="1.9"/></svg><div class="abs" style="left:275px;top:712px;width:1000px;height:17px;background:#f0f0f0;"></div><svg style="left:279px;top:715px" width="6" height="9" viewBox="0 0 6 9"><path d="M5 .8L1.2 4.5L5 8.2" fill="none" stroke="#b2b2b2" stroke-width="1.9"/></svg><svg style="left:1246px;top:715px" width="6" height="9" viewBox="0 0 6 9"><path d="M1 .8L4.8 4.5L1 8.2" fill="none" stroke="#b2b2b2" stroke-width="1.9"/></svg><svg style="left:930px;top:584px" width="11" height="11" viewBox="0 0 11 11"><rect x=".5" y=".5" width="10" height="10" rx="1.6" fill="#e8222e" stroke="#f08088" stroke-width="1"/><rect x="2" y="2" width="7" height="3" fill="#f04450" opacity=".6"/></svg><svg style="left:952px;top:583px" width="13" height="13" viewBox="0 0 13 13"><path d="M2.4 .2L6.5 4.2L10.6 .2L12.8 2.4L8.8 6.5L12.8 10.6L10.6 12.8L6.5 8.8L2.4 12.8L.2 10.6L4.2 6.5L.2 2.4z" fill="#a4a4a4"/></svg><svg style="left:974px;top:581px" width="16" height="16" viewBox="0 0 16 16"><g transform="scale(.8)"><path d="M2.4 .2L6.5 4.2L10.6 .2L12.8 2.4L8.8 6.5L12.8 10.6L10.6 12.8L6.5 8.8L2.4 12.8L.2 10.6L4.2 6.5L.2 2.4z" fill="#cfcfcf"/></g><g transform="translate(4.4,5) scale(.9)"><path d="M2.4 .2L6.5 4.2L10.6 .2L12.8 2.4L8.8 6.5L12.8 10.6L10.6 12.8L6.5 8.8L2.4 12.8L.2 10.6L4.2 6.5L.2 2.4z" fill="#a4a4a4"/></g></svg><div class="abs" style="left:995px;top:580px;width:1px;height:18px;background:#8e8e8e;"></div><svg style="left:1005px;top:581px" width="16" height="16" viewBox="0 0 16 16"><path d="M.5 .5h7l3 3v10h-10z" fill="#fcfcf8" stroke="#c9b78a" stroke-width=".9"/><path d="M2.2 4h5M2.2 6h6M2.2 8h6M2.2 10h4" stroke="#4f66a8" stroke-width=".9"/><g transform="translate(8,8.4) scale(.55)"><path d="M2.4 .2L6.5 4.2L10.6 .2L12.8 2.4L8.8 6.5L12.8 10.6L10.6 12.8L6.5 8.8L2.4 12.8L.2 10.6L4.2 6.5L.2 2.4z" fill="#8a8a8a"/></g></svg><svg style="left:1028px;top:582px" width="16" height="15" viewBox="0 0 16 15"><rect x="1.5" y=".5" width="13" height="13" fill="#e9f1fb" stroke="#8fa0c0" stroke-width=".9"/><rect x="10.4" y="1" width="3.6" height="12" fill="#f7f9fc" stroke="#8fa0c0" stroke-width=".7"/><rect x="11.6" y="2.4" width="1.2" height="1.2" fill="#3a5aa8"/><rect x="11.6" y="10.4" width="1.2" height="1.2" fill="#3a5aa8"/><path d="M2.6 8.4V6.6a2.6 2.6 0 0 1 5.2 0v1.8" fill="none" stroke="#c89a3a" stroke-width="1.3"/><rect x="1" y="8.4" width="8.4" height="6" rx=".8" fill="#e9b84a" stroke="#b88420" stroke-width=".8"/><rect x="4.6" y="10.4" width="1.2" height="2" fill="#8a5a10"/></svg><svg style="left:1051px;top:581px" width="16" height="15" viewBox="0 0 16 15"><path d="M.5 .5h7l3 3v10h-10z" fill="#fcfcf8" stroke="#c9b78a" stroke-width=".9"/><path d="M2.2 4h4M2.2 6h5M2.2 8h4M2.2 10h3" stroke="#4f66a8" stroke-width=".9"/><path d="M12.6 2.6v7.2H9.4V7.8L5.8 10.9l3.6 3.1V12h5.4V2.6z" fill="#fdf0b4" stroke="#d8a02a" stroke-width=".8" stroke-linejoin="round"/></svg><div class="abs" style="left:1070px;top:578px;width:23px;height:22px;background:#cde2fa;border:1px solid #4f9cf0;"></div><div class="abs" style="left:1093px;top:578px;width:23px;height:22px;background:#cde2fa;border:1px solid #4f9cf0;border-left:none;"></div><svg style="left:1075px;top:582px" width="15" height="14" viewBox="0 0 15 14"><rect x=".6" y="6" width="6" height="5" fill="#e4ecf8" stroke="#3a62a8" stroke-width="1"/><path d="M2.4 11.4h2.6v1.2h1.2v.9H1.2v-.9h1.2z" fill="#3a62a8"/><path d="M4.6 .6h9.8v7.2H7.4L5.4 9.4V7.8H4.6z" fill="#f4f7fc" stroke="#6a7fb0" stroke-width=".9"/><path d="M6.6 3h6M6.6 5.2h4.6" stroke="#3a4f9a" stroke-width="1"/></svg><svg style="left:1098px;top:582px" width="15" height="14" viewBox="0 0 15 14"><rect x=".6" y="6" width="6" height="5" fill="#e4ecf8" stroke="#3a62a8" stroke-width="1"/><path d="M2.4 11.4h2.6v1.2h1.2v.9H1.2v-.9h1.2z" fill="#3a62a8"/><path d="M4.6 .6h9.8v7.2H7.4L5.4 9.4V7.8H4.6z" fill="#f4f7fc" stroke="#6a7fb0" stroke-width=".9"/><path d="M6.4 2.2l3 3.6M9.4 2.2l-3 3.6" stroke="#e02020" stroke-width="1.5"/><path d="M10.8 3h2.2M10.8 5.2h2.2" stroke="#3a4f9a" stroke-width="1"/></svg><div class="abs" style="left:1118px;top:580px;width:1px;height:18px;background:#8e8e8e;"></div><svg style="left:1129px;top:582px" width="15" height="14" viewBox="0 0 15 14"><rect x=".5" y="3.5" width="12" height="9.5" fill="#f4f7fc" stroke="#a9b2c8" stroke-width=".9"/><rect x="1" y="4" width="11" height="2" fill="#4a8fd8"/><path d="M6 7.6l3 3" stroke="#555" stroke-width=".9"/><path d="M8 6.4l3.4-5.2l3 2.2l-3.6 4.6z" fill="#2fae3a" stroke="#1c8428" stroke-width=".7"/><circle cx="12.4" cy="2" r="1.6" fill="#4fd05a"/></svg><svg style="left:1153px;top:582px" width="14" height="14" viewBox="0 0 14 14"><rect x="1" y="1" width="11" height="8.6" rx="1.2" fill="#f3f7fc" stroke="#2c5cac" stroke-width="2"/><path d="M3.4 3.8h4.2M3.4 5.8h6" stroke="#3a4f9a" stroke-width="1"/><path d="M5 10.4h3v1.3h2.4v1.4H2.6v-1.4H5z" fill="#2c5cac"/></svg><svg style="left:1174px;top:587px" width="7" height="4" viewBox="0 0 7 4"><path d="M0 0h7l-3.5 4z" fill="#1a1a1a"/></svg><svg style="left:1190px;top:581px" width="16" height="16" viewBox="0 0 16 16"><rect x=".5" y="5" width="13" height="9.4" fill="#f3f9fe" stroke="#b0924c"/><rect x="0" y="3" width="14" height="2.7" fill="#3d8bd6"/><rect x="0" y="4.4" width="9" height="1.3" fill="#56a8e4"/><path d="M3.5 14.2Q10.5 13.6 12 8" fill="none" stroke="#f6e2a4" stroke-width="1.5"/><g transform="translate(8,1)"><path d="M3.5 .3Q4.5 2.5 6.7 3.5Q4.5 4.5 3.5 6.7Q2.5 4.5 .3 3.5Q2.5 2.5 3.5 .3z" fill="#f6ecc4" stroke="#e4cc84" stroke-width="1.4" stroke-linejoin="round"/><path d="M3.5 1.2v4.6M1.2 3.5h4.6" stroke="#fff" stroke-width="1.2"/></g></svg><svg style="left:1212px;top:587px" width="7" height="4" viewBox="0 0 7 4"><path d="M0 0h7l-3.5 4z" fill="#1a1a1a"/></svg><div class="abs" style="left:1229px;top:584px;width:10px;height:4px;border:1px solid #6e6e6e;background:#fff;"></div><div class="abs" style="left:1252px;top:584px;width:10px;height:10px;border:1px solid #6e6e6e;border-top-width:2px;background:#fff;"></div></div>
<div id="statusbar" class="abs"><div class="t" style="left:3px;top:2px;letter-spacing:0.045px;">wacky-chicken-desktop</div><div class="abs" style="left:995px;top:4px;width:2px;height:2px;background:#a39374;"></div><div class="abs" style="left:995px;top:9px;width:2px;height:2px;background:#a39374;"></div><div class="abs" style="left:995px;top:13px;width:2px;height:2px;background:#a39374;"></div><div class="abs" style="left:995px;top:18px;width:2px;height:2px;background:#a39374;"></div></div>
<div id="game" class="abs"><div class="abs" style="left:7px;top:30px;width:451px;height:500px;background:#000;"></div><svg style="left:9px;top:6px" width="16" height="16" viewBox="0 0 16 16"><rect width="16" height="16" fill="#fff"/><path d="M7.8 .2A7.8 7.8 0 0 1 15 8.4L11 7.4A5 5.6 0 0 0 10.4 1.8z" fill="#2f7cc0"/><path d="M4.6 2.6A7.4 7.4 0 0 1 7.6 .5L8 1.2A6 6 0 0 0 4.9 3.4z" fill="#8fbbe4"/><path d="M2.4 12.2A7.6 7.6 0 0 0 9.4 15.7L8.4 14A7 7 0 0 1 3.6 11.6z" fill="#2f7cc0"/><g fill="#000"><path d="M6 1.6L10 2.2L9.4 6L5.2 5.4z"/><path d="M.6 5.4L4 6.6L3.2 10.4L0 9.2z"/><path d="M5 7L9.6 8L8.8 12.6L4.4 11.4z"/><path d="M11 8.4L15.8 9.6L14.8 15L10.2 13.6z"/></g></svg><div class="t" style="left:381px;top:6.5px;letter-spacing:-0.172px;font-size:15px;color:#1e1e1e;">Slepice!</div></div>
</body>
</html>
